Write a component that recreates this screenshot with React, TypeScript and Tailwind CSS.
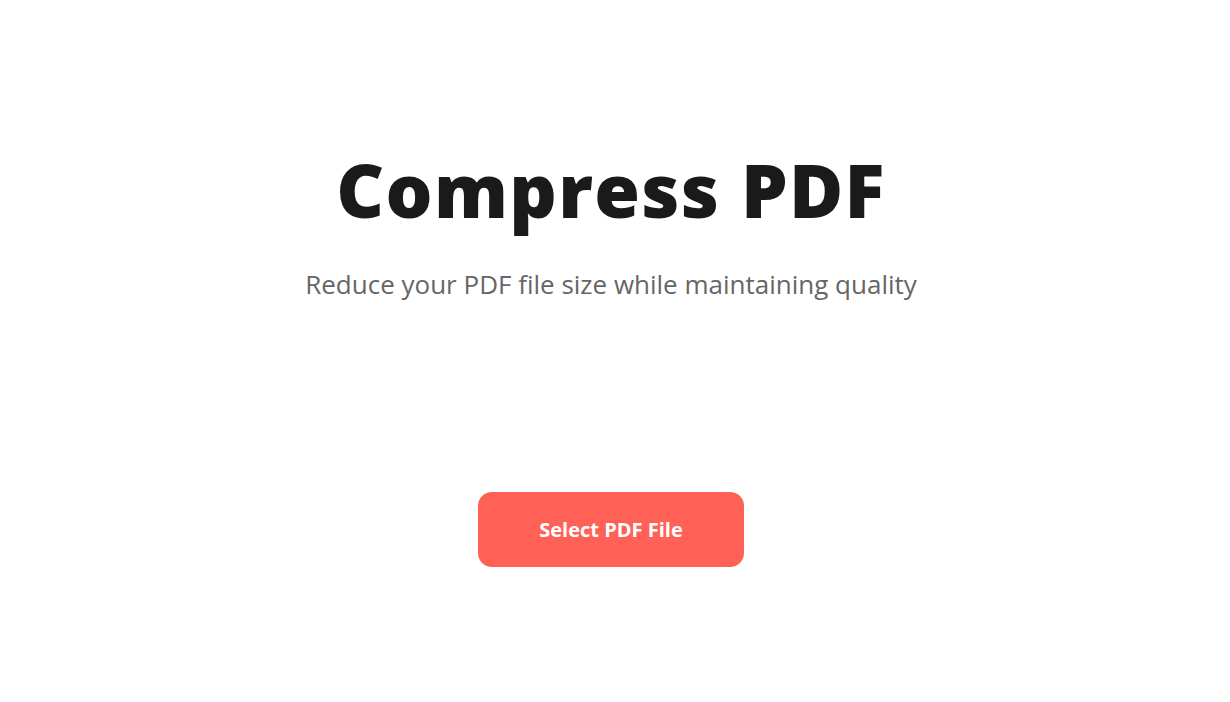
export default function App() {
  return (
    <div className="min-h-screen bg-white flex flex-col items-center pr-[8px]" style={{ fontFamily: '"Open Sans", "Noto Sans", sans-serif' }}>
      <h1 className="mt-[142px] text-[74px] leading-[96px] font-extrabold text-[#1a1a1a] tracking-[1.3px]">Compress PDF</h1>
      <p className="mt-[29px] text-[26px] leading-[34px] text-[#666666]">Reduce your PDF file size while maintaining quality</p>
      <button className="mt-[191px] w-[266px] h-[75px] rounded-[14px] bg-[#ff6156] text-white text-[20px] font-bold">
        Select PDF File
      </button>
    </div>
  )
}
